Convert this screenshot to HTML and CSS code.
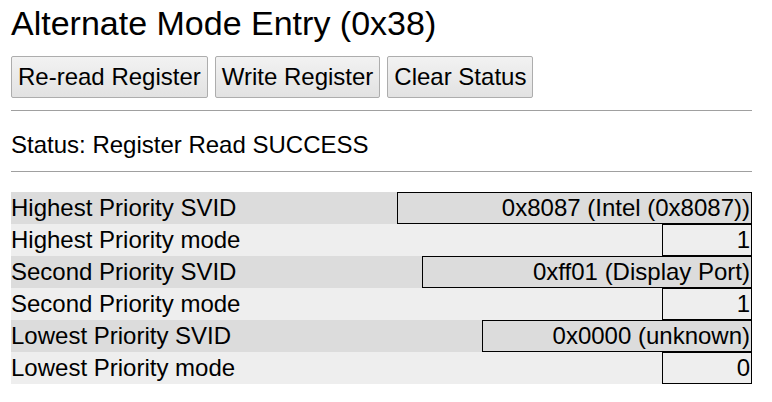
FILE: index.html
```html
<!DOCTYPE html>
<html>
<head>
<meta charset="utf-8">
<link rel="stylesheet" href="styles.css">
</head>
<body>
<div class="page">
  <h1 class="title">Alternate Mode Entry (0x38)</h1>
  <div class="actions">
    <button class="btn">Re-read Register</button>
    <button class="btn">Write Register</button>
    <button class="btn">Clear Status</button>
  </div>
  <hr class="rule">
  <p class="status">Status: Register Read SUCCESS</p>
  <hr class="rule">
  <div class="fields">
    <div class="row odd"><span class="label">Highest Priority SVID</span><span class="value w-svid1">0x8087 (Intel (0x8087))</span></div>
    <div class="row even"><span class="label">Highest Priority mode</span><span class="value w-mode">1</span></div>
    <div class="row odd"><span class="label">Second Priority SVID</span><span class="value w-svid2">0xff01 (Display Port)</span></div>
    <div class="row even"><span class="label">Second Priority mode</span><span class="value w-mode">1</span></div>
    <div class="row odd"><span class="label">Lowest Priority SVID</span><span class="value w-svid3">0x0000 (unknown)</span></div>
    <div class="row even"><span class="label">Lowest Priority mode</span><span class="value w-mode">0</span></div>
  </div>
</div>
</body>
</html>
```

FILE: styles.css
```css
html, body {
  margin: 0;
  padding: 0;
  background: #ffffff;
}
body {
  font-family: "Liberation Sans", Arial, sans-serif;
  font-size: 24px;
  color: #000;
}
.page {
  width: 741px;
  padding: 4px 0 0 11px;
}
.title {
  font-size: 34px;
  font-weight: normal;
  margin: 0;
  line-height: 39px;
}
.actions {
  display: flex;
  gap: 7px;
  margin-top: 13px;
}
.btn {
  font-family: "Liberation Sans", Arial, sans-serif;
  font-size: 24px;
  color: #000;
  height: 42px;
  padding: 0 6px;
  border: 1px solid #adadad;
  border-radius: 2px;
  background: linear-gradient(#f2f2f2, #e2e2e2);
}
.rule {
  border: 0;
  border-top: 1px solid #a0a0a0;
  margin: 12px 0 0 0;
  height: 0;
}
.status {
  margin: 0;
  padding: 20px 0 0 0;
  line-height: 28px;
}
.fields {
  margin-top: 20px;
}
.row {
  display: flex;
  justify-content: space-between;
  height: 32px;
  line-height: 30px;
}
.odd { background: #dcdcdc; }
.even { background: #eeeeee; }
.label {
  line-height: 32px;
}
.value {
  border: 1px solid #000;
  text-align: right;
  padding-right: 1px;
  box-sizing: border-box;
}
.w-svid1 { width: 355px; }
.w-svid2 { width: 330px; }
.w-svid3 { width: 270px; }
.w-mode { width: 90px; }
```
